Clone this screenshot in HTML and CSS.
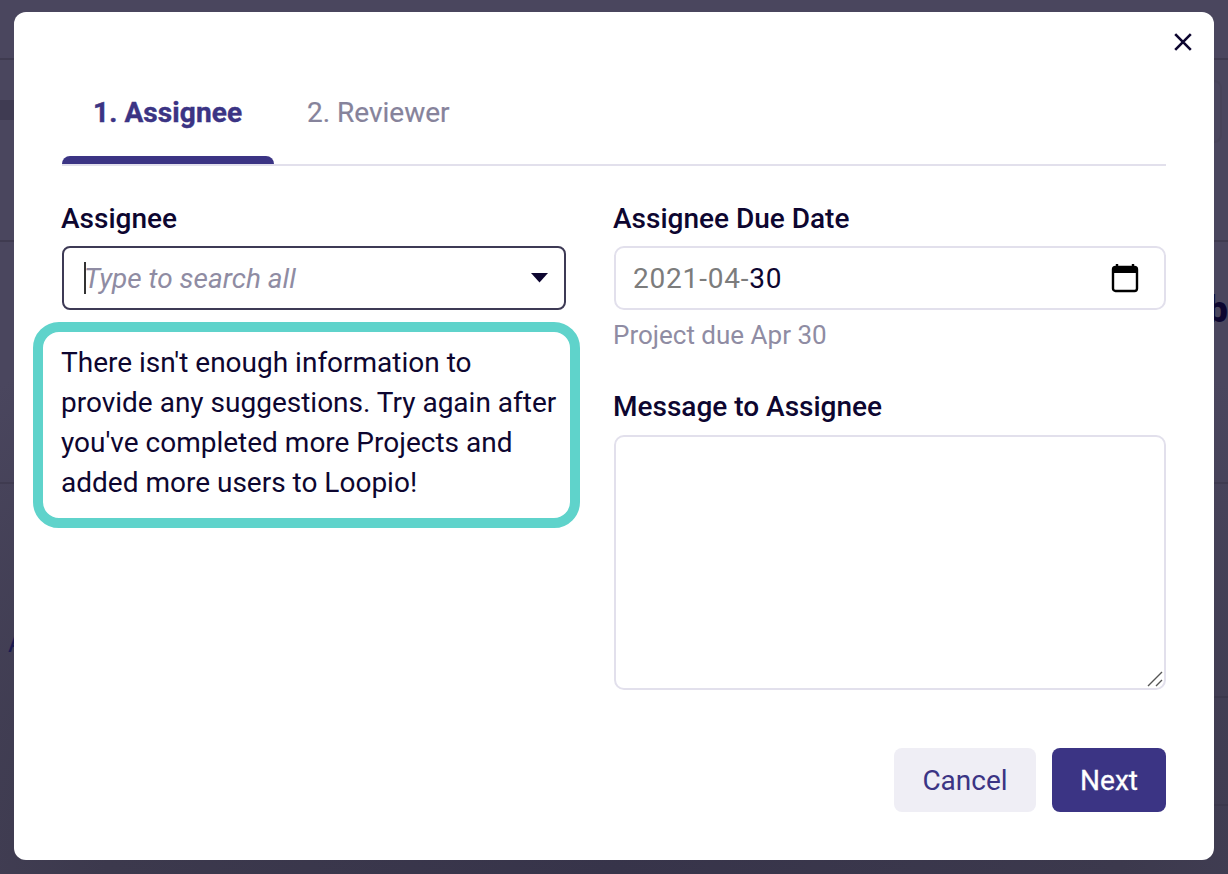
FILE: index.html
```html
<!DOCTYPE html>
<html lang="en">
<head>
<meta charset="utf-8">
<title>Assign Project</title>
<link rel="stylesheet" href="styles.css">
</head>
<body>
<div class="backdrop">
  <div class="bg-band"></div>
  <div class="bg-card"></div>
  <div class="bg-row bg-row-a"></div>
  <div class="bg-row bg-row-b"></div>
  <div class="bg-row bg-row-c"><span class="bg-b">b</span></div>
  <div class="bg-row bg-row-d"><span class="bg-a">A</span></div>
  <div class="bg-row bg-row-e"></div>
  <div class="bg-row bg-row-f"><span class="bg-y">y</span></div>
</div>
<main class="modal">
  <button class="close" aria-label="Close">
    <svg width="20" height="20" viewBox="0 0 20 20"><path d="M2.2 2.2 17.8 17.8M17.8 2.2 2.2 17.8" fill="none" stroke="#0d0630" stroke-width="2.6"/></svg>
  </button>
  <nav class="tabs">
    <div class="tab tab-active">1. Assignee</div>
    <div class="tab">2. Reviewer</div>
  </nav>
  <div class="columns">
    <section class="col-left">
      <label class="label">Assignee</label>
      <div class="select">
        <span class="caret"></span><span class="placeholder">Type to search all</span>
        <svg class="arrow" width="18" height="10" viewBox="0 0 18 10"><path d="M0 0H18L9 10Z" fill="#0d0630"/></svg>
      </div>
      <div class="suggestion">There isn't enough information to provide any suggestions. Try again after you've completed more Projects and added more users to Loopio!</div>
    </section>
    <section class="col-right">
      <label class="label">Assignee Due Date</label>
      <div class="date">
        <span class="date-value"><span class="dim">2021-04-</span>30</span>
        <svg width="28" height="30" viewBox="0 0 28 30"><path d="M6 1V5M22 1V5" stroke="#000" stroke-width="2.4" fill="none"/><rect x="2" y="4" width="24" height="24" rx="2.5" fill="none" stroke="#000" stroke-width="2.4"/><rect x="2" y="4" width="24" height="6" fill="#000"/></svg>
      </div>
      <p class="hint">Project due Apr 30</p>
      <label class="label label-message">Message to Assignee</label>
      <div class="textarea">
        <svg class="grip" width="16" height="16" viewBox="0 0 16 16"><path d="M1 15 15 1M9 15 15 9" stroke="#555" stroke-width="1.4" fill="none"/></svg>
      </div>
    </section>
  </div>
  <footer class="actions">
    <button class="btn btn-cancel">Cancel</button>
    <button class="btn btn-next">Next</button>
  </footer>
</main>
</body>
</html>
```
FILE: styles.css
```css
* { box-sizing: border-box; }
html, body { margin: 0; height: 100%; overflow: hidden; }
body {
  width: 1228px;
  height: 874px;
  position: relative;
  padding: 12px 14px 14px;
  background: #47435b;
  font-family: Roboto, "Liberation Sans", sans-serif;
  color: #0d0630;
}
.backdrop {
  position: absolute;
  inset: 0;
  display: flex;
  flex-direction: column;
  overflow: hidden;
  background: radial-gradient(ellipse 75% 75% at 50% 100%, #37344a 0%, #3c394d 55%, #4a465e 100%), #4c4860;
}
.bg-band { position: absolute; left: 0; top: 100px; width: 40px; height: 20px; background: #3f3b52; }
.bg-card { position: absolute; left: 1100px; top: 80px; width: 122px; height: 63px; border: 2px solid #474359; border-radius: 8px; }
.bg-row { position: relative; flex: none; }
.bg-row-a, .bg-row-b, .bg-row-c { border-bottom: 2px solid #3f3b50; }
.bg-row-a { height: 60px; }
.bg-row-b { height: 182px; }
.bg-row-c { height: 242px; }
.bg-row-d { height: 214px; }
.bg-row-e { height: 108px; }
.bg-row-f { flex: 1; }
.bg-row-d::after, .bg-row-e::after {
  content: "";
  position: absolute;
  right: 0;
  bottom: 0;
  width: 100px;
  height: 2px;
  background: #3b384c;
}
.bg-b { position: absolute; left: 1207px; top: 46px; font-size: 37px; font-weight: 900; color: #0d0630; }
.bg-a { position: absolute; left: 8px; top: 144px; font-size: 26px; color: #1b1a50; }
.bg-y { position: absolute; left: 134px; top: 22px; font-size: 26px; line-height: 30px; color: #1b1a40; }
.modal {
  position: relative;
  width: 1200px;
  height: 848px;
  background: #fff;
  border-radius: 12px;
  padding: 68px 48px 48px;
  display: flex;
  flex-direction: column;
}
.close {
  position: absolute;
  top: 20px;
  right: 21px;
  width: 20px;
  height: 20px;
  padding: 0;
  border: 0;
  background: none;
  display: flex;
}
.tabs {
  display: flex;
  height: 86px;
  border-bottom: 2px solid #e2e0ec;
}
.tab {
  width: 212px;
  padding: 15px 32px 0;
  font-size: 28px;
  line-height: 36px;
  font-weight: 400;
  white-space: nowrap;
  color: #86839b;
  -webkit-text-stroke: 0.2px #86839b;
}
.tab + .tab { padding-left: 33px; }
.tab-active {
  position: relative;
  height: 84px;
  padding-left: 31px;
  font-weight: 700;
  letter-spacing: 0.1px;
  color: #3b3484;
  -webkit-text-stroke: 0.4px #3b3484;
}
.tab-active::after {
  content: "";
  position: absolute;
  left: 0;
  right: 0;
  bottom: 0;
  height: 8px;
  background: #3b3484;
  border-radius: 8px 8px 0 0;
}
.columns {
  display: grid;
  grid-template-columns: 504px 552px;
  gap: 48px;
  margin-top: 35px;
  flex: 1;
}
.label {
  display: block;
  margin-left: -1px;
  font-size: 28px;
  line-height: 36px;
  font-weight: 500;
  color: #0d0630;
}
.select {
  display: flex;
  align-items: center;
  height: 64px;
  margin-top: 9px;
  border: 2px solid #3d3a55;
  border-radius: 8px;
  padding: 0 16px 0 20px;
}
.caret { width: 2px; height: 32px; background: #333; margin-right: -2px; }
.placeholder { padding-top: 1px; font-size: 28px; font-style: italic; color: #8f8ca3; flex: 1; }
.arrow { width: 17px; height: 9.5px; }
.suggestion {
  width: 547px;
  margin: 12px 0 0 -29px;
  padding: 11px 10px 15px 18px;
  border: 10px solid #5fd3cb;
  border-radius: 26px;
  font-size: 28px;
  line-height: 40px;
  color: #0d0630;
}
.date {
  display: flex;
  align-items: center;
  justify-content: space-between;
  height: 64px;
  margin-top: 9px;
  border: 2px solid #e2e0ec;
  border-radius: 10px;
  padding: 0 25px 0 17px;
}
.date-value { padding-top: 1px; font-size: 28px; letter-spacing: 0.8px; color: #0d0630; }
.dim { color: #7c7c7c; }
.hint { margin: 7px 0 0 -1px; font-size: 26px; line-height: 36px; color: #8f8ca3; }
.label-message { margin-top: 36px; }
.textarea {
  position: relative;
  height: 255px;
  margin-top: 10px;
  border: 2px solid #e2e0ec;
  border-radius: 10px;
}
.grip { position: absolute; right: 1px; bottom: 1px; }
.actions {
  display: flex;
  justify-content: flex-end;
  gap: 16px;
}
.btn {
  height: 64px;
  padding: 1px 0 0;
  border: 0;
  border-radius: 8px;
  font-family: inherit;
  font-size: 28px;
}
.btn-cancel { width: 142px; background: #efeef5; color: #3b3484; }
.btn-next { width: 114px; background: #3b3484; color: #fff; -webkit-text-stroke: 0.3px #fff; }
```
